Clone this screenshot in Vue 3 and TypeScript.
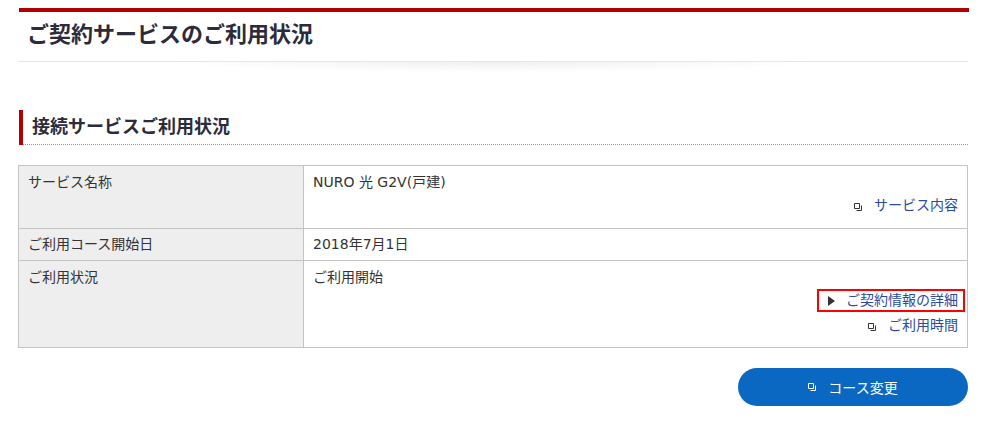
<template>
  <div class="page">
    <h1 class="title">ご契約サービスのご利用状況</h1>
    <h2 class="section">接続サービスご利用状況</h2>
    <table class="info">
      <tbody>
        <tr v-for="row in rows" :key="row.label" :class="{ compact: !row.links.length }">
          <th>{{ row.label }}</th>
          <td>
            <p class="value">{{ row.value }}</p>
            <div v-if="row.links.length" class="links">
              <a
                v-for="link in row.links"
                :key="link.text"
                class="link"
                :class="{ focused: link.focused }"
                href="#"
              >
                <svg v-if="link.arrow" class="arrow" width="7" height="10" viewBox="0 0 7 10">
                  <path d="M0 0L7 5L0 10Z" fill="#333" />
                </svg>
                <svg v-else class="win" width="8" height="8" viewBox="0 0 8 8">
                  <path d="M.5.5h5v5h-5zM7.5 2.5v5h-5" fill="none" stroke="#333" />
                </svg>
                <span>{{ link.text }}</span>
              </a>
            </div>
          </td>
        </tr>
      </tbody>
    </table>
    <div class="actions">
      <a class="btn" href="#">
        <svg width="8" height="8" viewBox="0 0 8 8">
          <path d="M.5.5h5v5h-5zM7.5 2.5v5h-5" fill="none" stroke="#fff" />
        </svg>
        <span>コース変更</span>
      </a>
    </div>
  </div>
</template>

<script setup lang="ts">
interface RowLink {
  text: string;
  arrow?: boolean;
  focused?: boolean;
}

interface Row {
  label: string;
  value: string;
  links: RowLink[];
}

const rows: Row[] = [
  { label: 'サービス名称', value: 'NURO 光 G2V(戸建)', links: [{ text: 'サービス内容' }] },
  { label: 'ご利用コース開始日', value: '2018年7月1日', links: [] },
  {
    label: 'ご利用状況',
    value: 'ご利用開始',
    links: [{ text: 'ご契約情報の詳細', arrow: true, focused: true }, { text: 'ご利用時間' }],
  },
];
</script>

<style>
html,
body {
  background: #fff;
}
</style>

<style scoped>
.page {
  box-sizing: border-box;
  width: 950px;
  margin-left: 18px;
  padding-top: 8px;
  font-family: "DejaVu Sans", "Noto Sans CJK JP", sans-serif;
  font-size: 14px;
  color: #333;
}

.title {
  position: relative;
  height: 50px;
  margin: 0 -1px 0 1px;
  padding-left: 8px;
  border-top: 4px solid #b00000;
  font-size: 22px;
  font-weight: 700;
  line-height: 45px;
  color: #2b2b3a;
}

/* soft shadow under the middle of the rule */
.title::before {
  content: "";
  position: absolute;
  left: 15%;
  right: 15%;
  top: 100%;
  height: 10px;
  background: radial-gradient(ellipse at top, rgba(0, 0, 0, 0.06), transparent 70%);
}

.title::after {
  content: "";
  position: absolute;
  left: -1px;
  right: 1px;
  bottom: 0;
  height: 1px;
  background: #e6e6e6;
}

.section {
  height: 35px;
  margin: 48px 0 20px 1px;
  padding-left: 9px;
  border-left: 4px solid #b00000;
  background: linear-gradient(to right, #999 50%, transparent 50%) left bottom / 2px 1px repeat-x;
  font-size: 18px;
  font-weight: 700;
  line-height: 34px;
  color: #2b2b3a;
}

.info {
  width: 950px;
  border-collapse: collapse;
  table-layout: fixed;
}

.info th,
.info td {
  box-sizing: border-box;
  padding: 5px 9px 3px;
  border: 1px solid #c4c4c4;
  font-weight: 400;
  line-height: 23px;
  text-align: left;
  vertical-align: top;
}

.info .compact th,
.info .compact td {
  padding: 4px 9px;
}

.info th {
  width: 285px;
  background: #eee;
}

.value {
  margin: 0;
}

.links {
  display: flex;
  flex-direction: column;
  gap: 2px;
  padding-bottom: 7px;
}

.link {
  display: flex;
  align-items: center;
  justify-content: flex-end;
  gap: 12px;
  height: 23px;
  color: #2a4ba0;
  text-decoration: none;
}

.link:only-child {
  margin-bottom: 1px;
}

.link .win {
  margin-top: 2px;
}

.link.focused {
  box-sizing: border-box;
  align-self: flex-end;
  gap: 11px;
  margin-right: -7px;
  padding: 0 7px 0 11px;
  outline: 2px solid #f00;
  outline-offset: -2px;
}

.actions {
  display: flex;
  justify-content: flex-end;
  margin-top: 20px;
}

.btn {
  display: flex;
  align-items: center;
  justify-content: center;
  gap: 12px;
  width: 230px;
  height: 38px;
  border-radius: 19px;
  background: #0b68c2;
  color: #fff;
  text-decoration: none;
}
</style>
